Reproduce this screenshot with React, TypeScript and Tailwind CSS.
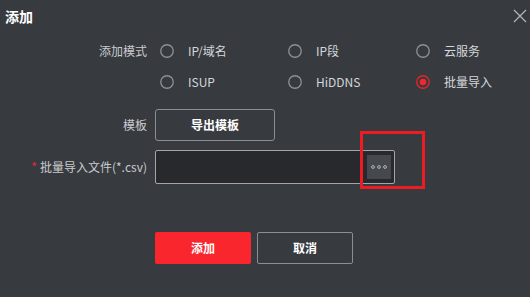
import React, { useState } from "react";

const font = { fontFamily: '"Noto Sans CJK SC", "Noto Sans", sans-serif' };

const modes = ["IP/域名", "IP段", "云服务", "ISUP", "HiDDNS", "批量导入"];

function Radio({ checked }: { checked: boolean }) {
  return (
    <svg width="14" height="14" viewBox="0 0 14 14" className="shrink-0">
      <circle cx="7" cy="7" r="6.25" fill="none" stroke={checked ? "#e5242b" : "#8e9094"} strokeWidth="1.3" />
      {checked && <circle cx="7" cy="7" r="3.3" fill="#f2262d" />}
    </svg>
  );
}

export default function App() {
  const [mode, setMode] = useState("批量导入");

  return (
    <div className="relative h-[297px] w-[530px] overflow-hidden bg-[#373a3f] text-[12px]" style={font}>
      <div className="flex items-start justify-between pl-[5px] pr-[3px] pt-[6px]">
        <h1 className="text-[14px] font-bold leading-[20px] text-white">添加</h1>
        <svg width="14" height="14" viewBox="0 0 14 14" className="mt-[3px]">
          <path d="M1 1L13 13M13 1L1 13" stroke="#b9bbbe" strokeWidth="1.1" />
        </svg>
      </div>

      <div className="mt-[15px]">
        <div className="flex">
          <div className="w-[147px] pt-[0px] text-right leading-[20px] text-[#c9cbce]">添加模式</div>
          <div className="ml-[13px] grid grid-cols-[128px_128px_110px] gap-y-[11px]">
            {modes.map((m) => (
              <button
                key={m}
                type="button"
                onClick={() => setMode(m)}
                className="flex h-[20px] items-center gap-[14px] text-left text-[12px] text-[#d4d7db]"
              >
                <Radio checked={mode === m} />
                <span className="leading-[20px]">{m}</span>
              </button>
            ))}
          </div>
        </div>

        <div className="mt-[17px] flex items-center">
          <div className="w-[147px] text-right text-[#c9cbce]">模板</div>
          <button
            type="button"
            className="ml-[8px] h-[32px] w-[120px] rounded-[3px] border border-[#8b8e92] font-bold text-white"
          >
            导出模板
          </button>
        </div>

        <div className="mt-[9px] flex items-center">
          <div className="w-[147px] text-right text-[#c9cbce]">
            <span className="mr-[3px] text-[#f0262d]">*</span>批量导入文件(*.csv)
          </div>
          <div className="ml-[8px] flex h-[34px] w-[240px] items-center justify-end rounded-[2px] border border-[#a3a5a8] bg-[#27292d] pr-[3px]">
            <div className="flex h-[24px] w-[24px] items-center justify-center bg-[#45484c]">
              <svg width="16" height="4" viewBox="0 0 16 4">
                <circle cx="2" cy="2" r="1.4" fill="none" stroke="#b3b5b8" strokeWidth="1" />
                <circle cx="8" cy="2" r="1.4" fill="none" stroke="#b3b5b8" strokeWidth="1" />
                <circle cx="14" cy="2" r="1.4" fill="none" stroke="#b3b5b8" strokeWidth="1" />
              </svg>
            </div>
          </div>
        </div>

        <div className="ml-[155px] mt-[48px] flex gap-[6px]">
          <button type="button" className="h-[32px] w-[96px] rounded-[2px] bg-[#f9262e] font-bold text-white">
            添加
          </button>
          <button
            type="button"
            className="h-[32px] w-[96px] rounded-[2px] border border-[#8b8e92] font-bold text-white"
          >
            取消
          </button>
        </div>
      </div>

      <div className="pointer-events-none absolute left-[360px] top-[131px] h-[58px] w-[65px] border-[3px] border-[#ec1c24]" />
    </div>
  );
}
